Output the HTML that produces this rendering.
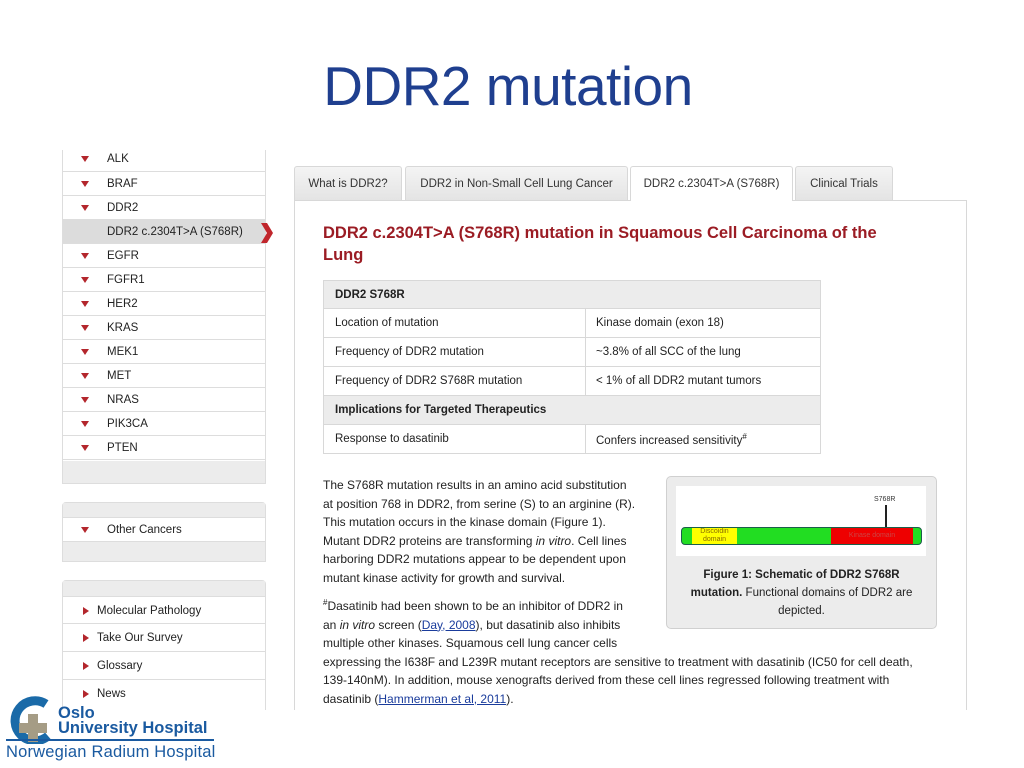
<!DOCTYPE html>
<html><head><meta charset="utf-8"><style>
*{margin:0;padding:0;box-sizing:border-box}
body{width:1024px;height:768px;background:#fff;position:relative;overflow:hidden;font-family:"Liberation Sans",sans-serif;color:#222}
.a{position:absolute;white-space:nowrap}
h1{position:absolute;left:0;width:1016px;text-align:center;top:54px;font-weight:normal;font-size:55px;letter-spacing:-0.5px;color:#1f3f8f;font-family:"Liberation Sans",sans-serif}
.nav{position:absolute;left:62px;width:204px;border:1px solid #ddd;background:#fff}
.r{position:absolute;left:0;width:202px;height:24px;border-bottom:1px solid #ddd;font-size:11.5px;line-height:24px}
.r span{position:absolute;left:44px}
.tri{position:absolute;left:18px;top:9px;width:0;height:0;border-left:4px solid transparent;border-right:4px solid transparent;border-top:6px solid #b3262c}
.rt{position:absolute;left:20px;top:9px;width:0;height:0;border-top:4px solid transparent;border-bottom:4px solid transparent;border-left:6px solid #b3262c}
.tab{position:absolute;top:166px;height:34px;background:linear-gradient(#f4f4f4,#e4e4e4);border:1px solid #d8d8d8;border-bottom:none;border-radius:3px 3px 0 0;font-size:11.5px;line-height:34px;text-align:center;color:#333}
.tr{position:absolute;left:323px;width:498px;height:29px;border:1px solid #d8d8d8;border-top:none;font-size:11.5px;line-height:28px}
.tr span{position:absolute;left:11px}.tr em{position:absolute;left:272px;font-style:normal}
.tr i{position:absolute;left:261px;top:0;bottom:0;border-left:1px solid #d8d8d8}
.p{position:absolute;left:323px;font-size:12px;white-space:nowrap;color:#222}
a{color:#1a3c9c;text-decoration:underline}
</style></head><body>
<h1>DDR2 mutation</h1>

<div class="nav" style="top:150px;height:334px;border-top:none">
<div class="r" style="top:0;height:22px;line-height:18px"><div class="tri" style="top:6px"></div><span>ALK</span></div>
<div class="r" style="top:22px"><div class="tri"></div><span>BRAF</span></div>
<div class="r" style="top:46px"><div class="tri"></div><span>DDR2</span></div>
<div class="r" style="top:70px;background:#dcdcdc"><span>DDR2 c.2304T&gt;A (S768R)</span></div>
<div class="r" style="top:94px"><div class="tri"></div><span>EGFR</span></div>
<div class="r" style="top:118px"><div class="tri"></div><span>FGFR1</span></div>
<div class="r" style="top:142px"><div class="tri"></div><span>HER2</span></div>
<div class="r" style="top:166px"><div class="tri"></div><span>KRAS</span></div>
<div class="r" style="top:190px"><div class="tri"></div><span>MEK1</span></div>
<div class="r" style="top:214px"><div class="tri"></div><span>MET</span></div>
<div class="r" style="top:238px"><div class="tri"></div><span>NRAS</span></div>
<div class="r" style="top:262px"><div class="tri"></div><span>PIK3CA</span></div>
<div class="r" style="top:286px"><div class="tri"></div><span>PTEN</span></div>
<div style="position:absolute;top:311px;left:0;right:0;bottom:0;background:#ececec"></div>
</div>
<svg class="a" style="left:260px;top:222px" width="14" height="22"><path d="M1 1 L7 1 L13 11 L7 21 L1 21 L7 11 Z" fill="#c0262c"/></svg>

<div class="nav" style="top:502px;height:60px;border-radius:4px 4px 0 0">
<div style="position:absolute;top:0;left:0;right:0;height:14px;background:#ececec"></div>
<div class="r" style="top:14px;height:25px;line-height:25px;border-top:1px solid #ddd"><div class="tri"></div><span>Other Cancers</span></div>
<div style="position:absolute;top:39px;left:0;right:0;bottom:0;background:#ececec"></div>
</div>

<div class="nav" style="top:580px;height:130px;border-radius:4px 4px 0 0;border-bottom:none">
<div style="position:absolute;top:0;left:0;right:0;height:15px;background:#ececec"></div>
<div class="r" style="top:15px;height:28px;line-height:28px;border-top:1px solid #ddd"><div class="rt" style="top:10px"></div><span style="left:34px">Molecular Pathology</span></div>
<div class="r" style="top:43px;height:28px;line-height:28px"><div class="rt" style="top:10px"></div><span style="left:34px">Take Our Survey</span></div>
<div class="r" style="top:71px;height:28px;line-height:28px"><div class="rt" style="top:10px"></div><span style="left:34px">Glossary</span></div>
<div class="r" style="top:99px;height:28px;line-height:28px;border:none"><div class="rt" style="top:10px"></div><span style="left:34px">News</span></div>
</div>

<!-- main panel -->
<div class="a" style="left:294px;top:200px;width:673px;height:510px;border:1px solid #d8d8d8;border-bottom:none"></div>
<div class="tab" style="left:294px;width:108px">What is DDR2?</div>
<div class="tab" style="left:405px;width:223px">DDR2 in Non-Small Cell Lung Cancer</div>
<div class="tab" style="left:630px;width:163px;background:#fff;height:35px">DDR2 c.2304T&gt;A (S768R)</div>
<div class="tab" style="left:795px;width:98px">Clinical Trials</div>

<div class="a" style="left:323px;top:222px;font-size:16.5px;font-weight:bold;color:#9b1c24;line-height:22px">DDR2 c.2304T&gt;A (S768R) mutation in Squamous Cell Carcinoma of the<br>Lung</div>

<div class="tr" style="top:280px;height:29px;border-top:1px solid #d8d8d8;background:#ececec;font-weight:bold"><span>DDR2 S768R</span></div>
<div class="tr" style="top:309px"><span>Location of mutation</span><i></i><em>Kinase domain (exon 18)</em></div>
<div class="tr" style="top:338px"><span>Frequency of DDR2 mutation</span><i></i><em>~3.8% of all SCC of the lung</em></div>
<div class="tr" style="top:367px"><span>Frequency of DDR2 S768R mutation</span><i></i><em>&lt; 1% of all DDR2 mutant tumors</em></div>
<div class="tr" style="top:396px;background:#ececec;font-weight:bold"><span>Implications for Targeted Therapeutics</span></div>
<div class="tr" style="top:425px"><span>Response to dasatinib</span><i></i><em style="line-height:24px">Confers increased sensitivity<sup style="font-size:8px">#</sup></em></div>

<div class="p" style="top:476px;line-height:18.5px">The S768R mutation results in an amino acid substitution<br>at position 768 in DDR2, from serine (S) to an arginine (R).<br>This mutation occurs in the kinase domain (Figure 1).<br>Mutant DDR2 proteins are transforming <i>in vitro</i>. Cell lines<br>harboring DDR2 mutations appear to be dependent upon<br>mutant kinase activity for growth and survival.</div>
<div class="p" style="top:594px;line-height:18.5px"><sup style="font-size:8px">#</sup>Dasatinib had been shown to be an inhibitor of DDR2 in<br>an <i>in vitro</i> screen (<a>Day, 2008</a>), but dasatinib also inhibits<br>multiple other kinases. Squamous cell lung cancer cells<br>expressing the I638F and L239R mutant receptors are sensitive to treatment with dasatinib (IC50 for cell death,<br>139-140nM). In addition, mouse xenografts derived from these cell lines regressed following treatment with<br>dasatinib (<a>Hammerman et al, 2011</a>).</div>

<div class="a" style="left:666px;top:476px;width:271px;height:153px;background:#ececec;border:1px solid #d0d0d0;border-radius:5px"></div>
<div class="a" style="left:676px;top:486px;width:250px;height:70px;background:#fff"></div>
<div class="a" style="left:874px;top:496px;font-size:7px;color:#333">S768R</div>
<div class="a" style="left:885px;top:505px;width:1.5px;height:22px;background:#222"></div>
<div class="a" style="left:681px;top:527px;width:241px;height:18px;background:#22dd22;border:1.5px solid #1b5e4a;border-radius:4px"></div>
<div class="a" style="left:692px;top:528px;width:45px;height:16px;background:#ffff00;font-size:7px;color:#8a6d00;line-height:8px;text-align:center">Discoidin<br>domain</div>
<div class="a" style="left:831px;top:528px;width:82px;height:16px;background:#ee0000;font-size:7px;color:#cc4444;line-height:16px;text-align:center">Kinase domain</div>
<div class="a" style="left:666px;top:566px;width:271px;text-align:center;font-size:11.5px;line-height:18px;white-space:normal;padding:0 18px"><b>Figure 1: Schematic of DDR2 S768R mutation.</b> Functional domains of DDR2 are depicted.</div>

<!-- logo -->
<svg class="a" style="left:4px;top:696px" width="56" height="48">
<path d="M42 8 A20 20 0 1 0 44 40" fill="none" stroke="#1a6aa8" stroke-width="9"/>
<rect x="24" y="18" width="10" height="28" fill="#a59c85"/>
<rect x="15" y="27" width="28" height="10" fill="#a59c85"/>
</svg>
<div class="a" style="left:58px;top:706px;font-size:16.5px;line-height:15px;color:#1a5aa0;font-weight:bold">Oslo<br>University Hospital</div>
<div class="a" style="left:6px;top:739px;width:208px;height:2px;background:#1a5aa0"></div>
<div class="a" style="left:6px;top:743px;font-size:16.5px;letter-spacing:0.2px;color:#1a5aa0">Norwegian Radium Hospital</div>
</body></html>
